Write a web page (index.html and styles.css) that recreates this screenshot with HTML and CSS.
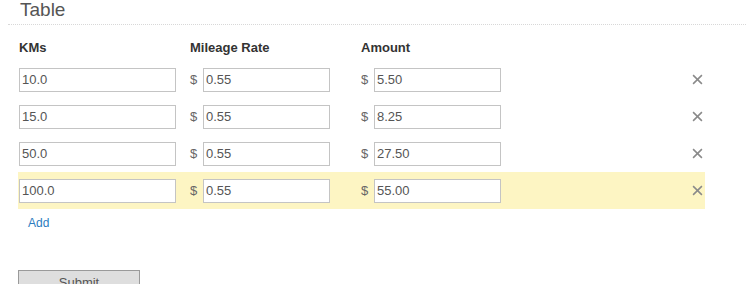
FILE: index.html
```html
<!DOCTYPE html>
<html>
  <head>
    <title>Mileage Table</title>
    <link rel="stylesheet" href="styles.css">
  </head>
  <body>
    <div class="page">
      <div class="section-header">
        <h2>Table</h2>
      </div>
      <div class="mileage">
        <div class="row head">
          <div class="cell km">KMs</div>
          <div class="cell rate">Mileage Rate</div>
          <div class="cell amount">Amount</div>
        </div>
        <div class="row">
          <div class="cell km"><input type="text" value="10.0"></div>
          <div class="cell rate"><span class="cur">$</span><input type="text" value="0.55"></div>
          <div class="cell amount"><span class="cur">$</span><input type="text" value="5.50"></div>
          <div class="cell remove"><svg viewBox="0 0 10 10" width="11" height="11"><path d="M1 1L9 9M9 1L1 9"/></svg></div>
        </div>
        <div class="row">
          <div class="cell km"><input type="text" value="15.0"></div>
          <div class="cell rate"><span class="cur">$</span><input type="text" value="0.55"></div>
          <div class="cell amount"><span class="cur">$</span><input type="text" value="8.25"></div>
          <div class="cell remove"><svg viewBox="0 0 10 10" width="11" height="11"><path d="M1 1L9 9M9 1L1 9"/></svg></div>
        </div>
        <div class="row">
          <div class="cell km"><input type="text" value="50.0"></div>
          <div class="cell rate"><span class="cur">$</span><input type="text" value="0.55"></div>
          <div class="cell amount"><span class="cur">$</span><input type="text" value="27.50"></div>
          <div class="cell remove"><svg viewBox="0 0 10 10" width="11" height="11"><path d="M1 1L9 9M9 1L1 9"/></svg></div>
        </div>
        <div class="row active">
          <div class="cell km"><input type="text" value="100.0"></div>
          <div class="cell rate"><span class="cur">$</span><input type="text" value="0.55"></div>
          <div class="cell amount"><span class="cur">$</span><input type="text" value="55.00"></div>
          <div class="cell remove"><svg viewBox="0 0 10 10" width="11" height="11"><path d="M1 1L9 9M9 1L1 9"/></svg></div>
        </div>
        <div class="add-row">
          <a href="#" class="add-link">Add</a>
        </div>
      </div>
      <div class="actions">
        <button type="button" class="btn-submit">Submit</button>
      </div>
    </div>
  </body>
</html>
```

FILE: styles.css
```css
* {
  box-sizing: border-box;
  margin: 0;
  padding: 0;
}

body {
  background: #fff;
  color: #333;
  font-family: "Liberation Sans", Arial, sans-serif;
  font-size: 13px;
}

.page {
  padding-left: 8px;
}

.section-header {
  border-bottom: 1px dotted #d8d8d8;
  height: 25px;
  padding-left: 12px;
}

.section-header h2 {
  font-size: 19px;
  font-weight: normal;
  color: #555;
  line-height: 20px;
}

.mileage {
  padding-left: 10px;
  width: 697px;
}

.row {
  display: flex;
  align-items: center;
  height: 37px;
}

.row.head {
  height: 36px;
  font-weight: bold;
  color: #333;
  padding-top: 8px;
}

.row.active {
  background-color: #fdf5c3;
}

.cell.km {
  width: 172px;
  padding-left: 1px;
}

.cell.rate {
  width: 171px;
  display: flex;
  align-items: center;
}

.cell.amount {
  width: 171px;
  display: flex;
  align-items: center;
}

.cur {
  color: #666;
  width: 13px;
}

.cell input {
  height: 24px;
  border: 1px solid #c4c4c4;
  font-family: "Liberation Sans", Arial, sans-serif;
  font-size: 13px;
  color: #555;
  padding: 0 2px;
  background: #fff;
}

.cell.km input {
  width: 157px;
}

.cell.rate input,
.cell.amount input {
  width: 127px;
}

.cell.remove {
  margin-left: auto;
  width: 16px;
  display: flex;
  justify-content: center;
}

.cell.remove svg {
  stroke: #8a8a8a;
  stroke-width: 1.4;
  fill: none;
}

.add-row {
  height: 28px;
  padding-left: 10px;
  padding-top: 6px;
}

.add-link {
  color: #2c7cc0;
  text-decoration: none;
  font-size: 12px;
}

.actions {
  padding-left: 10px;
  padding-top: 33px;
}

.btn-submit {
  width: 122px;
  height: 24px;
  background: #dedede;
  border: 1px solid #9a9a9a;
  color: #555;
  font-family: "Liberation Sans", Arial, sans-serif;
  font-size: 13px;
  padding: 0;
}
```
